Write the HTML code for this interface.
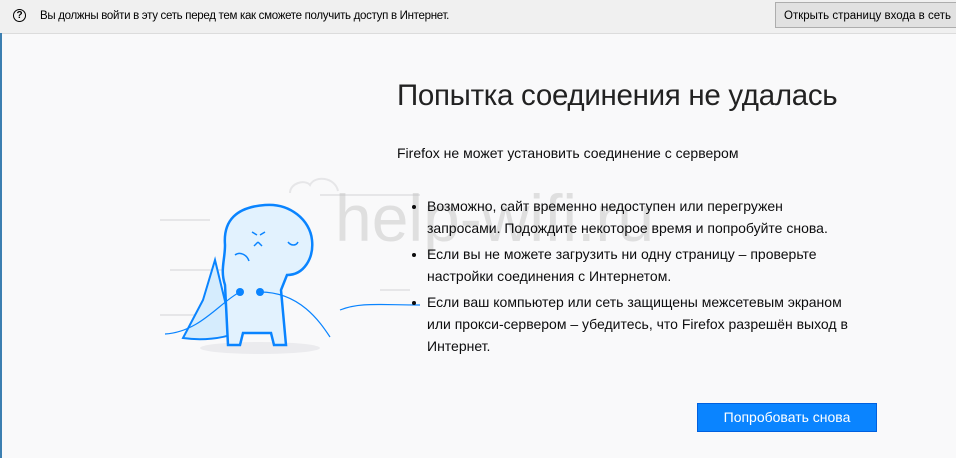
<!DOCTYPE html>
<html><head><meta charset="utf-8"><style>
body{margin:0;width:956px;height:458px;overflow:hidden;background:#f9f9fa;font-family:"Liberation Sans",sans-serif;position:relative}
.bar{position:absolute;left:0;top:0;width:956px;height:33px;background:#f0f0f0;border-bottom:1px solid #dcdcdc;font-size:11.5px;color:#000}
.bar .q{position:absolute;left:13px;top:9px;width:11px;height:11px;border:1.5px solid #000;border-radius:50%;font-size:10px;line-height:11px;text-align:center;font-weight:bold}
.bar .t{position:absolute;left:40px;top:10px;letter-spacing:-0.3px}
.bar .b{position:absolute;left:775px;top:2px;width:190px;height:26px;background:#e1e1e1;border:1px solid #adadad;font-size:11.5px;line-height:26px;padding-left:8px;box-sizing:border-box}
.lb{position:absolute;left:0;top:33px;width:2px;height:425px;background:#3c7fb1}
h1{position:absolute;left:397px;top:79px;margin:0;font-weight:300;font-size:29.5px;color:#222;letter-spacing:-0.3px}
.sub{position:absolute;left:397px;top:145px;font-size:14px;color:#0c0c0d}
ul{position:absolute;left:412px;top:195px;margin:0;padding:0 0 0 15px;width:430px;font-size:14px;line-height:22px;color:#0c0c0d}
li{margin-bottom:4px}
.btn{position:absolute;left:697px;top:403px;width:180px;height:29px;background:#0a84ff;border:1px solid #0060df;box-sizing:border-box;color:#fff;font-size:14px;line-height:27px;text-align:center}
.wm{position:absolute;left:335px;top:180px;font-size:66px;color:rgba(190,190,190,.45);font-family:"Liberation Sans",sans-serif;letter-spacing:0px}
</style></head><body>
<div class="bar"><div class="q">?</div><div class="t">Вы должны войти в эту сеть перед тем как сможете получить доступ в Интернет.</div><div class="b">Открыть страницу входа в сеть</div></div>
<div class="lb"></div>
<svg style="position:absolute;left:160px;top:160px" width="280" height="200">
<g fill="none" stroke="#e6e6e8" stroke-width="2"><path d="M0 60h50M10 110h60M0 155h80M160 35h100M220 130h30"/><path d="M130 33c0-10 15-14 20-8c5-10 25-8 28 6"/></g>
<ellipse cx="100" cy="188" rx="60" ry="6" fill="#ebebee"/>
<path d="M55 100l-12 40l-20 38c20 3 40 0 50-4z" fill="#d5ecfd" stroke="#0a84ff" stroke-width="2"/>
<path d="M65 85c-2-25 12-38 40-40c25-2 45 15 47 35c2 18-8 35-25 35l-6 15l5 55h-12l-3-12h-28l-3 12h-12l-3-60c-5-15 0-25 0-40z" fill="#e2f2fe" stroke="#0a84ff" stroke-width="2.5"/>
<path d="M92 72l5 3M100 75l5-3M98 82l-4 4M98 82l4 4M128 82c3 4 8 4 10 0M75 95c5-4 12 0 14 6" stroke="#0a84ff" stroke-width="1.5" fill="none"/>
<circle cx="80" cy="132" r="4" fill="#0a84ff"/><circle cx="100" cy="132" r="4" fill="#0a84ff"/>
<path d="M80 132c-20 10-40 40-75 42M100 132c40 0 60 30 70 45M180 150c20-8 40-5 80-5" stroke="#0a84ff" stroke-width="1.2" fill="none"/>
</svg>
<h1>Попытка соединения не удалась</h1>
<div class="sub">Firefox не может установить соединение с сервером</div>
<div class="wm">help-wifi.ru</div>
<ul>
<li>Возможно, сайт временно недоступен или перегружен запросами. Подождите некоторое время и попробуйте снова.</li>
<li>Если вы не можете загрузить ни одну страницу – проверьте настройки соединения с Интернетом.</li>
<li>Если ваш компьютер или сеть защищены межсетевым экраном или прокси-сервером – убедитесь, что Firefox разрешён выход в Интернет.</li>
</ul>
<div class="btn">Попробовать снова</div>
</body></html>
